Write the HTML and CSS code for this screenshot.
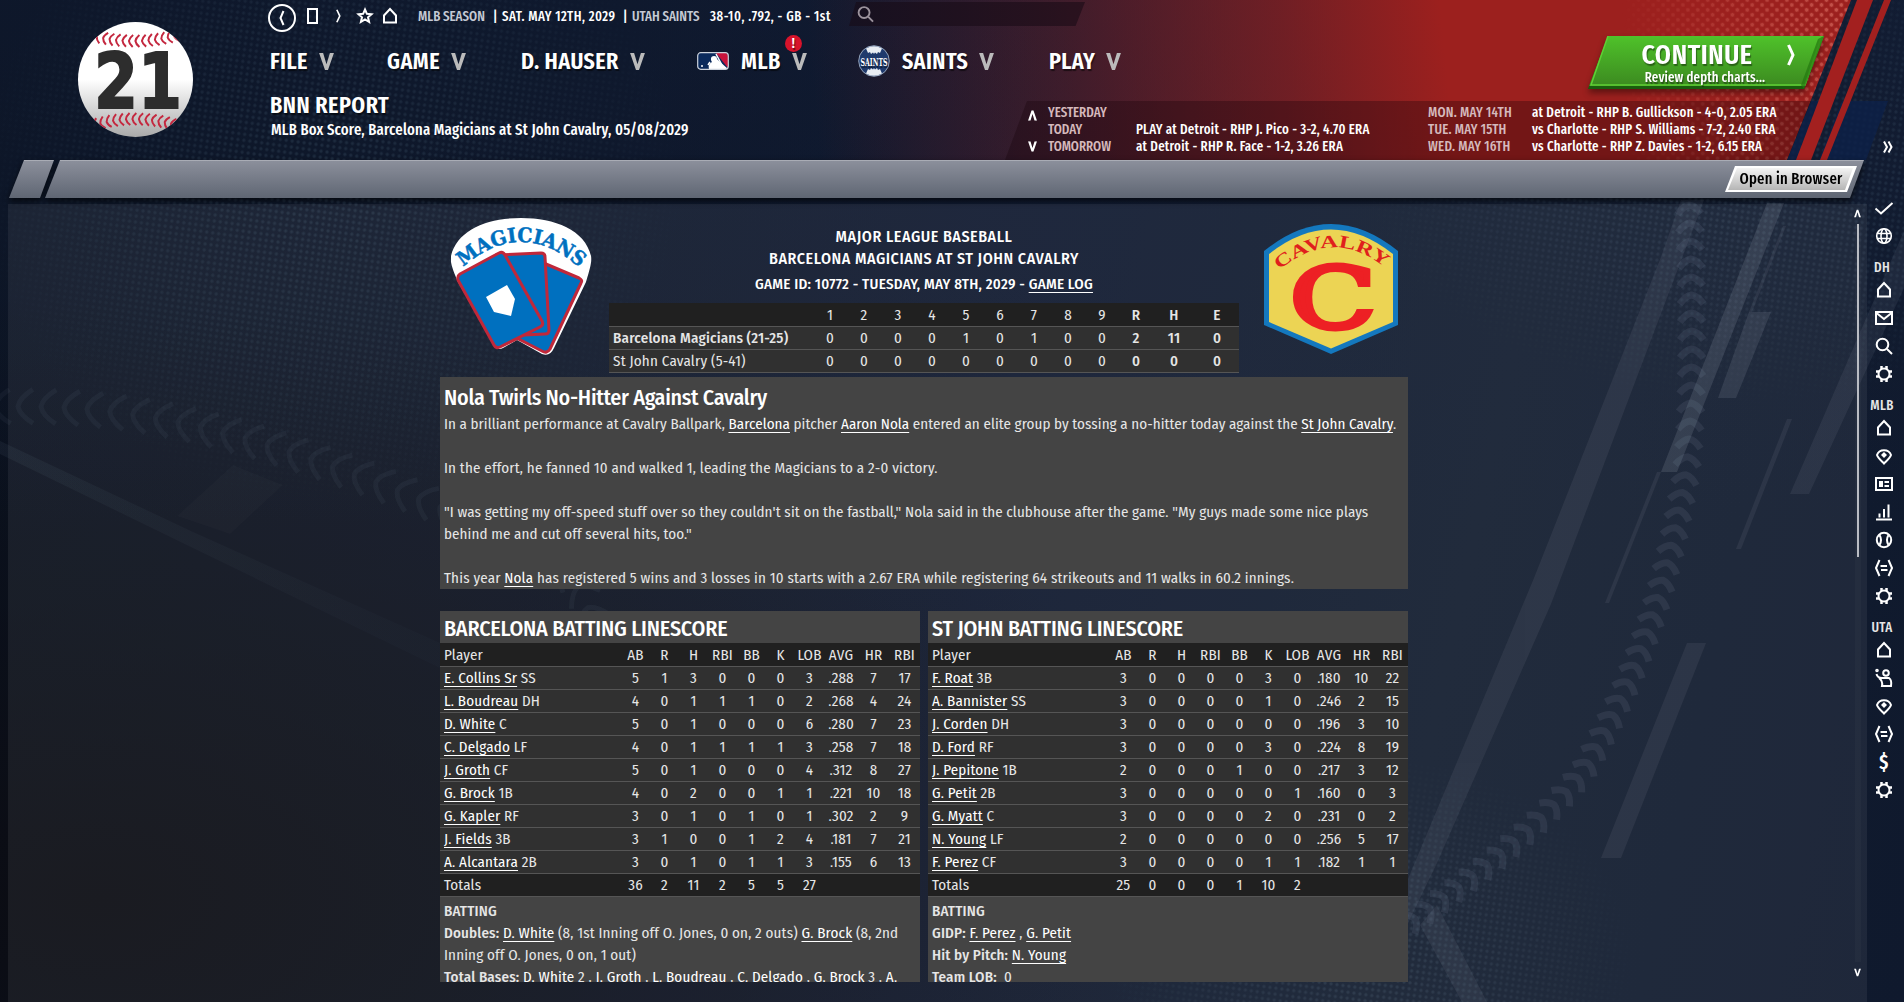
FILE: index.html
```
<!DOCTYPE html>
<html lang="en">
<head>
    <meta charset="UTF-8">
    <title>BNN Report - MLB Box Score</title>
    <link rel="stylesheet" href="styles.css">
</head>
<body>
    <svg class="backdrop" width="1904" height="1002" viewBox="0 0 1904 1002">
        <defs>
            <pattern id="dots" width="6" height="6" patternUnits="userSpaceOnUse" patternTransform="rotate(8)"><circle cx="3" cy="3" r="1.7" fill="#6f93a8"/></pattern>
            <pattern id="redDots" width="7" height="7" patternUnits="userSpaceOnUse" patternTransform="rotate(45)"><circle cx="3.5" cy="3.5" r="2" fill="#ff9d8c"/></pattern>
            <radialGradient id="fade"><stop offset="0" stop-color="#fff"/><stop offset=".55" stop-color="#fff" stop-opacity=".6"/><stop offset="1" stop-color="#fff" stop-opacity="0"/></radialGradient>
            <linearGradient id="fadeRight"><stop offset="0" stop-color="#fff" stop-opacity="0"/><stop offset="1" stop-color="#fff"/></linearGradient>
            <mask id="dotMask">
                <ellipse cx="330" cy="180" rx="360" ry="330" fill="url(#fade)"/>
                <ellipse cx="1750" cy="170" rx="400" ry="240" fill="url(#fade)"/>
                <ellipse cx="1370" cy="960" rx="270" ry="210" fill="url(#fade)"/>
            </mask>
            <mask id="redMask"><rect x="1620" y="0" width="230" height="160" fill="url(#fadeRight)"/></mask>
            <linearGradient id="red" gradientUnits="userSpaceOnUse" x1="810" x2="1440" y1="60" y2="0">
                <stop offset="0" stop-color="#9c201e" stop-opacity="0"/>
                <stop offset=".4" stop-color="#9c201e" stop-opacity=".33"/>
                <stop offset=".75" stop-color="#9c201e" stop-opacity=".68"/>
                <stop offset="1" stop-color="#9c201e"/>
            </linearGradient>
            <linearGradient id="streak" gradientUnits="userSpaceOnUse" x1="0" x2="440" y1="0" y2="0"><stop offset="0" stop-color="#8fa3bb" stop-opacity=".07"/><stop offset="1" stop-color="#3f7080" stop-opacity=".03"/></linearGradient>
        </defs>
        <rect width="1904" height="1002" fill="url(#dots)" mask="url(#dotMask)" opacity=".17"/>
        <polygon points="0,441 193,532 440,643 440,668 193,548 0,454" fill="url(#streak)"/>
        <polygon points="177,516 233,465 283,485 230,534" fill="#fff" opacity=".02"/>
        <g fill="#b8c0d0" opacity=".08">
            <polygon points="1681,200 1704,200 1551,604 1437,863 1395,950 1395,900 1408,879 1534,578 1661,257"/>
            <polygon points="1767,203 1784,203 1677,472 1661,472"/>
            <polygon points="1783,226 1786,226 1752,312 1749,312"/>
            <polygon points="1749,312 1771,312 1736,398 1718,398"/>
            <polygon points="1657,472 1661,472 1609,603 1605,603"/>
            <polygon points="1787,419 1792,419 1741,549 1736,549"/>
            <polygon points="1904,231 1904,288 1809,494 1790,494"/>
            <polygon points="1687,643 1706,643 1621,858 1601,858"/>
            <polygon points="1437,905 1487,1002 1462,1002 1420,925"/>
        </g>
        <polygon points="1767,203 1784,203 1677,472 1661,472" fill="#b8c0d0" opacity=".07"/>
        <polygon points="1749,312 1771,312 1736,398 1718,398" fill="#b8c0d0" opacity=".05"/>
        <g id="stitchesLeft" fill="none" stroke="#93a5bd" stroke-opacity=".06"></g>
        <g id="stitches" fill="none" stroke="#93a5bd" stroke-opacity=".11"></g>
        <polygon points="780,0 1851,0 1787,160 780,160" fill="url(#red)"/>
        <g mask="url(#redMask)"><polygon points="1500,0 1851,0 1787,160 1500,160" fill="url(#redDots)" opacity=".42"/></g>
        <polygon points="1842,101 1888,101 1866,160 1819,160" fill="#0d2048" opacity=".8"/>
        <polygon points="1811,101 1830,101 1806,160 1787,160" fill="#0d2048" opacity=".8"/>
        <polygon points="1857,0 1873,0 1811,160 1796,160" fill="#a3201f"/>
        <polygon points="1884,0 1891,0 1827,160 1820,160" fill="#a3201f"/>
        <polygon points="1027,101 1811,101 1787,160 1005,160" fill="#150008" opacity=".3"/>
    </svg>

    <svg class="symbols">
        <symbol id="home" viewBox="0 0 18 18"><path d="M3 15.5V8.5L9 2l6 6.500v7z"/></symbol>
        <symbol id="gear" viewBox="0 0 18 18"><circle cx="9" cy="9" r="5.500"/><path stroke-width="2.500" d="M6.500 1v3M11.500 1v3M6.500 14v3M11.500 14v3M1 6.500h3M1 11.500h3M14 6.500h3M14 11.500h3" /></symbol>
        <symbol id="pin" viewBox="0 0 18 18"><path d="M2 8C4 1.500 14 1.500 16 8c-1 3-4 5.500-7 8.500C6 13.500 3 11 2 8z"/><path stroke="none" fill="#fff" d="M9 5l3 3-3 3-3-3z"/></symbol>
        <symbol id="brackets" viewBox="0 0 18 18"><path d="M4.500 1L1 9l3.500 8M13.500 1L17 9l-3.500 8M5.500 7H12M6 11h6.500"/></symbol>
        <symbol id="search" viewBox="0 0 18 18"><circle cx="7.500" cy="7.500" r="5.800"/><path d="M12 12l5 5"/></symbol>
        <symbol id="vee" viewBox="0 0 14 16"><path stroke="none" d="M0 0h3.800L7 10.500 10.200 0H14L8.400 16H5.600z"/></symbol>
    </svg>

    <div class="app">
        <header>
            <div class="logo">
                <svg width="115" height="115" viewBox="0 0 115 115">
                    <defs>
                        <linearGradient id="ball" x2="0" y2="1"><stop offset=".5" stop-color="#fff"/><stop offset="1" stop-color="#aaa"/></linearGradient>
                        <clipPath id="ballClip"><circle cx="57.500" cy="57.500" r="57.500"/></clipPath>
                    </defs>
                    <circle cx="57.500" cy="57.500" r="57.500" fill="url(#ball)"/>
                    <g id="seams" fill="none" stroke="#c4283f" stroke-width="2" clip-path="url(#ballClip)"></g>
                    <text x="16" y="86" class="logo-num" textLength="88" lengthAdjust="spacingAndGlyphs">21</text>
                </svg>
            </div>
            <div class="head-main">
                <div class="topbar">
                    <svg class="ic back" viewBox="0 0 28 28"><circle cx="14" cy="14" r="13"/><path d="M15.500 7l-3 7 3 7"/></svg>
                    <svg class="ic stop" viewBox="0 0 11 16"><path d="M1 1h9v14H1z"/></svg>
                    <svg class="ic fwd" viewBox="0 0 6 16"><path d="M1 0.500l3.500 7.500L1 15.500"/></svg>
                    <svg class="ic star" viewBox="0 0 16 16"><path d="M8 1.500l1.900 4.300 4.600.4-3.500 3.100 1.100 4.700L8 11.500 3.900 14 5 9.300 1.500 6.200l4.600-.4z"/></svg>
                    <svg class="ic house"><use href="#home"/></svg>
                    <span class="t-season">MLB SEASON</span><span class="t-bar">|</span>
                    <span class="t-date">SAT. MAY 12TH, 2029</span><span class="t-bar">|</span>
                    <span class="t-team">UTAH SAINTS</span><span class="t-rec">38-10, .792, - GB - 1st</span>
                    <div class="search"><svg class="ic"><use href="#search"/></svg></div>
                </div>
                <div class="navrow">
                    <nav>
                        <a>FILE<svg class="vee"><use href="#vee"/></svg></a>
                        <a>GAME<svg class="vee"><use href="#vee"/></svg></a>
                        <a>D. HAUSER<svg class="vee"><use href="#vee"/></svg></a>
                        <a>
                            <svg class="mlb" width="32" height="18" viewBox="0 0 32 18">
                                <rect x=".7" y=".7" width="30.600" height="16.600" rx="3" fill="#0b2a5c"/>
                                <path d="M19 1h9q3 0 3 3v12z" fill="#c8143c"/>
                                <path d="M12 17c-1-4 1-6 3-7-2-3-1-6 2-6 2 0 3 1 3 3l2 2 9 8z" fill="#fff"/>
                                <path d="M19 2l7 13M13 10l-2 3" stroke="#fff" stroke-width="1.500"/>
                                <circle cx="5" cy="14" r="1" fill="#fff"/>
                                <rect x=".7" y=".7" width="30.600" height="16.600" rx="3" fill="none" stroke="#cdd3dc" stroke-width="1.200"/>
                            </svg>MLB<svg class="vee"><use href="#vee"/></svg><span class="alert">!</span>
                        </a>
                        <a>
                            <svg class="saints" width="32" height="32" viewBox="0 0 32 32">
                                <circle cx="16" cy="16" r="15.300" fill="#1f3a6d" stroke="#93a3ba"/>
                                <path d="M8 3.500Q16-1 24 3.500L22 8l-2-1-1 2-2-1.500L16 9l-1-1.500L13 9l-1-2-2 1zM8 28.500q8 4.500 16 0L22 24l-2 1-1-2-2 1.500-1-1.500-1 1.500-2-1.500-1 2-2-1z" fill="#e8edf3"/>
                                <text x="2.500" y="20.500" class="saints-txt" textLength="27" lengthAdjust="spacingAndGlyphs">SAINTS</text>
                            </svg>SAINTS<svg class="vee"><use href="#vee"/></svg>
                        </a>
                        <a>PLAY<svg class="vee"><use href="#vee"/></svg></a>
                    </nav>
                    <div class="continue">
                        <svg class="continue-bg" width="236" height="53" viewBox="0 0 236 53">
                            <defs><linearGradient id="green" x2="0" y2="1"><stop offset="0" stop-color="#4fc22a"/><stop offset="1" stop-color="#3c8a20"/></linearGradient></defs>
                            <path d="M20 0h216L216 53H0z" fill="#1a5c0d"/>
                            <path d="M20 0h216L217 50H1z" fill="url(#green)"/>
                            <path d="M20 0L3 49h214L233 2" fill="none" stroke="#5fcf35" stroke-width="1.500"/>
                            <path d="M236 0L216 53l-3-4L230 3z" fill="#24780f" opacity=".7"/>
                        </svg>
                        <div class="continue-txt"><b>CONTINUE</b><span>Review depth charts...</span></div>
                        <svg class="ic continue-arrow" viewBox="0 0 8 22"><path d="M1.500 1L6 11l-4.500 10"/></svg>
                    </div>
                </div>
                <div class="titlerow">
                    <div>
                        <h1>BNN REPORT</h1>
                        <p class="sub">MLB Box Score, Barcelona Magicians at St John Cavalry, 05/08/2029</p>
                    </div>
                    <div class="schedule">
                        <div class="arrows">
                            <svg class="up" viewBox="0 0 14 16"><use href="#vee"/></svg>
                            <svg viewBox="0 0 14 16"><use href="#vee"/></svg>
                        </div>
                        <div class="days d1">YESTERDAY<br>TODAY<br>TOMORROW</div>
                        <div class="d2"><br>PLAY at Detroit - RHP J. Pico - 3-2, 4.70 ERA<br>at Detroit - RHP R. Face - 1-2, 3.26 ERA</div>
                        <div class="days d3">MON. MAY 14TH<br>TUE. MAY 15TH<br>WED. MAY 16TH</div>
                        <div class="d4">at Detroit - RHP B. Gullickson - 4-0, 2.05 ERA<br>vs Charlotte - RHP S. Williams - 7-2, 2.40 ERA<br>vs Charlotte - RHP Z. Davies - 1-2, 6.15 ERA</div>
                    </div>
                </div>
            </div>
        </header>

        <div class="toolbar">
            <div class="tb-small"></div>
            <div class="tb-main"><div class="open-btn"><span>Open in Browser</span></div></div>
        </div>

        <main>
            <div class="content">
                <div class="matchup">
                    <svg class="mag-logo" width="142" height="140" viewBox="0 0 142 140">
                        <defs><path id="magArc" d="M9 52Q71-5 133 54"/></defs>
                        <path d="M7 64C1 50-1 44 0 38C6 12 36 0 70 0S134 12 140 38C141 44 139 50 135 64L103 130q-4 9-12 6L66 122l-14 8q-6 3-9-3z" fill="#fff"/>
                        <g fill="#0070bf" stroke="#c0283a" stroke-width="3" stroke-linejoin="round">
                            <path d="M76 38L128 60q4 2 2 5L99 131q-3 5-8 2L50 112z"/>
                            <path d="M45 37l45-2q4 0 4 4l4 73q0 4-4 4l-40 2z"/>
                            <path d="M9 56L48 35q4-2 6 2l37 66q2 4-2 6l-40 20q-4 2-6-2L7 62q-1-4 2-6z"/>
                        </g>
                        <path d="M35 79l21-12 8 14-4 17-17-4z" fill="#fff"/>
                        <text class="mag-txt"><textPath href="#magArc" startOffset="4" textLength="130" lengthAdjust="spacingAndGlyphs">MAGICIANS</textPath></text>
                    </svg>
                    <div class="center">
                        <div class="h-line">MAJOR LEAGUE BASEBALL</div>
                        <div class="h-line">BARCELONA MAGICIANS AT ST JOHN CAVALRY</div>
                        <div class="h-game">GAME ID: 10772 - TUESDAY, MAY 8TH, 2029 - <a>GAME LOG</a></div>
                        <table class="score">
                            <colgroup><col class="c-team"><col span="9"><col><col class="c-h"><col class="c-e"></colgroup>
                            <tr class="dark"><td></td><td>1</td><td>2</td><td>3</td><td>4</td><td>5</td><td>6</td><td>7</td><td>8</td><td>9</td><th>R</th><th>H</th><th>E</th></tr>
                            <tr><th>Barcelona Magicians (21-25)</th><td>0</td><td>0</td><td>0</td><td>0</td><td>1</td><td>0</td><td>1</td><td>0</td><td>0</td><th>2</th><th>11</th><th>0</th></tr>
                            <tr><td>St John Cavalry (5-41)</td><td>0</td><td>0</td><td>0</td><td>0</td><td>0</td><td>0</td><td>0</td><td>0</td><td>0</td><th>0</th><th>0</th><th>0</th></tr>
                        </table>
                    </div>
                    <svg class="cav-logo" width="134" height="130" viewBox="0 0 134 130">
                        <defs><path id="cavArc" d="M15 46Q68 3 119 42"/></defs>
                        <path d="M0 27Q67-27 134 27V101L67 130 0 101z" fill="#1478be"/>
                        <path d="M5 30Q67-19 129 30V98L67 124.500 5 98z" fill="#ecd454"/>
                        <text class="cav-txt"><textPath href="#cavArc" textLength="116" lengthAdjust="spacingAndGlyphs">CAVALRY</textPath></text>
                        <text x="26" y="104" class="cav-c" textLength="86" lengthAdjust="spacingAndGlyphs">C</text>
                    </svg>
                </div>

                <div class="article">
                    <h2>Nola Twirls No-Hitter Against Cavalry</h2>
                    <p class="lead">In a brilliant performance at Cavalry Ballpark, <a>Barcelona</a> pitcher <a>Aaron Nola</a> entered an elite group by tossing a no-hitter today against the <a>St John Cavalry</a>.</p>
                    <p>In the effort, he fanned 10 and walked 1, leading the Magicians to a 2-0 victory.</p>
                    <p class="quote">"I was getting my off-speed stuff over so they couldn't sit on the fastball," Nola said in the clubhouse after the game. "My guys made some nice plays<br>behind me and cut off several hits, too."</p>
                    <p>This year <a>Nola</a> has registered 5 wins and 3 losses in 10 starts with a 2.67 ERA while registering 64 strikeouts and 11 walks in 60.2 innings.</p>
                </div>

                <div class="boxes">
                    <section class="box">
                        <h2>BARCELONA BATTING LINESCORE</h2>
                        <table class="batting" id="barcelona"></table>
                        <div class="notes">
                            <b>BATTING</b><br>
                            <b>Doubles:</b> <a>D. White</a> (8, 1st Inning off O. Jones, 0 on, 2 outs) <a>G. Brock</a> (8, 2nd<br>Inning off O. Jones, 0 on, 1 out)<br>
                            <b>Total Bases:</b> <a>D. White</a> 2 , <a>J. Groth</a> , <a>L. Boudreau</a> , <a>C. Delgado</a> , <a>G. Brock</a> 3 , <a>A.</a>
                        </div>
                    </section>
                    <section class="box">
                        <h2>ST JOHN BATTING LINESCORE</h2>
                        <table class="batting" id="stjohn"></table>
                        <div class="notes">
                            <b>BATTING</b><br>
                            <b>GIDP:</b> <a>F. Perez</a> , <a>G. Petit</a><br>
                            <b>Hit by Pitch:</b> <a>N. Young</a><br>
                            <b>Team LOB:</b>&nbsp; 0
                        </div>
                    </section>
                </div>
            </div>
            <div class="scrollbar">
                <svg class="up" viewBox="0 0 14 16"><use href="#vee"/></svg>
                <div class="track"><div class="thumb"></div></div>
                <svg viewBox="0 0 14 16"><use href="#vee"/></svg>
            </div>
        </main>

        <aside>
            <svg class="ic more" viewBox="0 0 10 12"><path d="M1 0.500l3 5.500-3 5.500M5.500 0.500l3 5.500-3 5.500"/></svg>
            <svg class="ic" viewBox="0 0 18 18"><path d="M.5 9.500L6 14.500 17.500 4"/></svg>
            <svg class="ic thin" viewBox="0 0 18 18"><circle cx="9" cy="9" r="7.300"/><ellipse cx="9" cy="9" rx="3" ry="7.300"/><path d="M2 6.500h14M2 11.500h14"/></svg>
            <span>DH</span>
            <svg class="ic"><use href="#home"/></svg>
            <svg class="ic" viewBox="0 0 18 18"><path d="M1 3h16v12H1zM1.500 4L9 10l7.500-6"/></svg>
            <svg class="ic"><use href="#search"/></svg>
            <svg class="ic"><use href="#gear"/></svg>
            <span>MLB</span>
            <svg class="ic"><use href="#home"/></svg>
            <svg class="ic"><use href="#pin"/></svg>
            <svg class="ic" viewBox="0 0 18 18"><path d="M1 3h16v12H1z"/><path stroke="none" fill="#fff" d="M4 6h4v6H4zM9.500 6H14v2H9.500zM9.500 10H14v2H9.500z"/></svg>
            <svg class="ic" viewBox="0 0 18 18"><path d="M1 16.500h16M4.500 14.500v-4M9 14.500V6M13.500 14.500V1.500"/></svg>
            <svg class="ic" viewBox="0 0 18 18"><circle cx="9" cy="9" r="7.200"/><path d="M4.500 4q3 5 0 10M13.500 4q-3 5 0 10"/></svg>
            <svg class="ic"><use href="#brackets"/></svg>
            <svg class="ic"><use href="#gear"/></svg>
            <span>UTA</span>
            <svg class="ic"><use href="#home"/></svg>
            <svg class="ic" viewBox="0 0 18 18"><circle cx="11" cy="4" r="2.800"/><circle cx="2" cy="1.500" r=".8"/><path d="M1.500 5q1 4 5.500 4h7q3 2 2 8H7q1-5-3-8"/></svg>
            <svg class="ic"><use href="#pin"/></svg>
            <svg class="ic"><use href="#brackets"/></svg>
            <span class="dollar">$</span>
            <svg class="ic"><use href="#gear"/></svg>
        </aside>
    </div>

    <script>
        const heads = ['AB', 'R', 'H', 'RBI', 'BB', 'K', 'LOB', 'AVG', 'HR', 'RBI'];

        const barcelona = [
            ['E. Collins Sr', 'SS', 5, 1, 3, 0, 0, 0, 3, '.288', 7, 17],
            ['L. Boudreau', 'DH', 4, 0, 1, 1, 1, 0, 2, '.268', 4, 24],
            ['D. White', 'C', 5, 0, 1, 0, 0, 0, 6, '.280', 7, 23],
            ['C. Delgado', 'LF', 4, 0, 1, 1, 1, 1, 3, '.258', 7, 18],
            ['J. Groth', 'CF', 5, 0, 1, 0, 0, 0, 4, '.312', 8, 27],
            ['G. Brock', '1B', 4, 0, 2, 0, 0, 1, 1, '.221', 10, 18],
            ['G. Kapler', 'RF', 3, 0, 1, 0, 1, 0, 1, '.302', 2, 9],
            ['J. Fields', '3B', 3, 1, 0, 0, 1, 2, 4, '.181', 7, 21],
            ['A. Alcantara', '2B', 3, 0, 1, 0, 1, 1, 3, '.155', 6, 13]
        ];

        const stjohn = [
            ['F. Roat', '3B', 3, 0, 0, 0, 0, 3, 0, '.180', 10, 22],
            ['A. Bannister', 'SS', 3, 0, 0, 0, 0, 1, 0, '.246', 2, 15],
            ['J. Corden', 'DH', 3, 0, 0, 0, 0, 0, 0, '.196', 3, 10],
            ['D. Ford', 'RF', 3, 0, 0, 0, 0, 3, 0, '.224', 8, 19],
            ['J. Pepitone', '1B', 2, 0, 0, 0, 1, 0, 0, '.217', 3, 12],
            ['G. Petit', '2B', 3, 0, 0, 0, 0, 0, 1, '.160', 0, 3],
            ['G. Myatt', 'C', 3, 0, 0, 0, 0, 2, 0, '.231', 0, 2],
            ['N. Young', 'LF', 2, 0, 0, 0, 0, 0, 0, '.256', 5, 17],
            ['F. Perez', 'CF', 3, 0, 0, 0, 0, 1, 1, '.182', 1, 1]
        ];

        function cells(list) {
            return list.map(v => '<td>' + v + '</td>').join('');
        }

        function fillTable(id, players, totals) {
            let html = '<colgroup><col class="c-name"><col span="7"><col class="c-avg"><col class="c-last" span="2"></colgroup>';
            html += '<tr class="dark"><td>Player</td>' + cells(heads) + '</tr>';
            players.forEach(p => {
                html += '<tr><td><a>' + p[0] + '</a> ' + p[1] + '</td>' + cells(p.slice(2)) + '</tr>';
            });
            html += '<tr class="dark"><td>Totals</td>' + cells(totals.concat(['', '', ''])) + '</tr>';
            document.getElementById(id).innerHTML = html;
        }

        fillTable('barcelona', barcelona, [36, 2, 11, 2, 5, 5, 27]);
        fillTable('stjohn', stjohn, [25, 0, 0, 0, 1, 10, 2]);

        // stitches follow a curve, each one turned along it
        function stitch(group, curve, step, half, depth, width) {
            const ns = 'http://www.w3.org/2000/svg';
            const path = document.createElementNS(ns, 'path');
            path.setAttribute('d', curve);
            const len = path.getTotalLength();
            for (let d = 0; d < len; d += step) {
                const a = path.getPointAtLength(d);
                const b = path.getPointAtLength(Math.min(d + 1, len));
                const angle = Math.atan2(b.y - a.y, b.x - a.x) * 180 / Math.PI;
                const mark = document.createElementNS(ns, 'path');
                mark.setAttribute('d', `M${depth} ${-half}Q${depth * 0.1} ${-half * 0.5} 0 0Q${depth * 0.1} ${half * 0.5} ${depth} ${half}`);
                mark.setAttribute('transform', `translate(${a.x} ${a.y}) rotate(${angle})`);
                mark.setAttribute('stroke-width', width);
                document.getElementById(group).appendChild(mark);
            }
        }

        stitch('stitchesLeft', 'M-5 407C130 402 250 430 437 506S560 590 610 640', 23, 17, 15, 5);
        stitch('stitches', 'M1689 205C1694 330 1692 450 1684 485C1665 590 1640 670 1584 770C1547 820 1487 868 1400 930', 18, 12, 9, 7);
        stitch('seams', 'M96 14Q57 24 16 14', 6.5, 6, -4, 2);
        stitch('seams', 'M16 103Q57 91 98 103', 6.5, 6, 4, 2);
    </script>
</body>
</html>
```
FILE: styles.css
```
* {
    box-sizing: border-box;
}
body {
    margin: 0;
    width: 1904px;
    height: 1002px;
    overflow: hidden;
    position: relative;
    font-family: "Fira Sans Condensed", "Open Sans", sans-serif;
    font-size: 15px;
    color: #e6e6e6;
    background: linear-gradient(102deg, #0a1220 0%, #0c1526 30%, #0e182e 52%, #131d2f 75%, #0f192d 100%);
}
body::before {
    content: "";
    position: absolute;
    inset: 0;
    background: linear-gradient(to bottom, #131e3870 0, #131d3350 300px, transparent 520px), radial-gradient(1100px 600px at 100px 900px, #0b0c13, #0b0c1300);
}
.backdrop {
    position: absolute;
    left: 0;
    top: 0;
}
.symbols {
    display: none;
}
h1, h2, p {
    margin: 0;
    font-weight: 500;
}
b, th {
    font-weight: 500;
}
.ic {
    width: 18px;
    height: 18px;
    flex: none;
    fill: none;
    stroke: #fff;
    stroke-width: 2;
    overflow: visible;
}
.thin {
    stroke-width: 1.6;
}
.app {
    position: relative;
    display: grid;
    grid-template-columns: 1867px 37px;
    grid-template-rows: 160px 44px 798px;
}

/* header */
header {
    display: flex;
    font-family: "Fira Sans Extra Condensed", "Fira Sans Condensed", "Open Sans", sans-serif;
    font-weight: 500;
    font-size: 14px;
    color: #fff;
}
.logo {
    width: 271px;
    flex: none;
    padding: 22px 0 0 78px;
}
.logo-num {
    font: bold 77px "DejaVu Sans", sans-serif;
    fill: #2d2d2d;
    stroke: #2d2d2d;
    stroke-width: 2;
}
.head-main {
    flex: 1;
}
.topbar {
    display: flex;
    align-items: center;
    height: 34px;
    padding-bottom: 2px;
    white-space: nowrap;
}
.back {
    width: 28px;
    height: 28px;
    margin: 4px 11px 0 -3px;
}
.stop {
    width: 11px;
    height: 16px;
    margin-right: 18px;
}
.fwd {
    width: 5px;
    height: 16px;
    margin-right: 16px;
}
.star {
    width: 16px;
    height: 16px;
    margin-right: 8px;
}
.house {
    margin-right: 19px;
}
.t-season, .t-team {
    color: #c5cad4;
}
.t-season {
    width: 75px;
}
.t-bar {
    width: 9px;
}
.t-date {
    width: 121px;
    letter-spacing: 0.5px;
}
.t-team {
    width: 78px;
}
.t-rec {
    width: 139px;
    letter-spacing: 0.55px;
}
.search {
    width: 236px;
    height: 24px;
    padding: 3px 8px;
    margin-top: -4px;
    background: #1509148c;
    clip-path: polygon(3% 0, 100% 0, 96% 100%, 0 100%);
}
.search .ic {
    stroke: #9c939d;
    width: 17px;
}
.navrow {
    display: flex;
    justify-content: space-between;
    height: 56px;
    padding-top: 2px;
    padding-right: 43px;
}
nav {
    display: grid;
    grid-template-columns: 117px 134px 176px 161px 191px 100px;
    height: 50px;
    font-size: 24px;
    font-weight: 600;
    letter-spacing: 0.4px;
}
nav a {
    position: relative;
    left: -1px;
    display: flex;
    align-items: center;
    text-shadow: 1px 2px 1px #0008;
}
.vee {
    width: 15px;
    height: 17px;
    margin-left: 11px;
    fill: #bbb;
}
.mlb, .saints {
    margin-right: 12px;
}
.saints-txt {
    font: bold 11px "DejaVu Serif", serif;
    letter-spacing: 0;
    fill: #fff;
}
.alert {
    position: absolute;
    left: 88px;
    top: -1px;
    width: 17px;
    height: 17px;
    border-radius: 50%;
    background: #d8132b;
    font-size: 14px;
    line-height: 17px;
    text-align: center;
}
.continue {
    position: relative;
    width: 236px;
    height: 53px;
    filter: drop-shadow(0 4px 3px #0006);
}
.continue-bg {
    position: absolute;
    left: 0;
    top: 0;
}
.continue-txt {
    position: relative;
    width: 218px;
    text-align: center;
    text-shadow: 1px 2px 1px #0006;
}
.continue-txt b {
    display: block;
    font-size: 28px;
    line-height: 37px;
    font-weight: 600;
    letter-spacing: 0.6px;
}
.continue-txt span {
    display: block;
    line-height: 9px;
    padding-left: 16px;
    letter-spacing: 0.15px;
}
.continue-arrow {
    position: absolute;
    right: 29px;
    top: 8px;
    width: 8px;
    height: 22px;
    stroke-width: 3;
}
.titlerow {
    display: flex;
    justify-content: space-between;
    height: 70px;
}
.titlerow h1 {
    font-size: 24px;
    font-weight: 600;
    line-height: 31px;
    letter-spacing: 0.5px;
    margin-left: -1px;
    text-shadow: 1px 2px 1px #0008;
}
.sub {
    font-size: 16px;
    line-height: 17px;
    letter-spacing: 0.2px;
}
.schedule {
    display: flex;
    width: 839px;
    padding-top: 14px;
    line-height: 17px;
    letter-spacing: 0.25px;
    white-space: nowrap;
}
.schedule > div {
    flex: none;
}
.arrows {
    width: 20px;
    display: flex;
    flex-direction: column;
    justify-content: space-between;
    height: 48px;
    padding-top: 6px;
}
.arrows svg, .scrollbar svg {
    width: 9px;
    height: 11px;
    fill: #fff;
}
.up {
    transform: scaleY(-1);
}
.days {
    color: #d5b9bc;
}
.d1 {
    width: 88px;
    letter-spacing: 0;
}
.d2 {
    width: 292px;
}
.d3 {
    width: 104px;
}

/* grey bar */
.toolbar {
    display: flex;
    padding: 0 3px 6px 9px;
    filter: drop-shadow(0 3px 3px #000a);
}
.tb-small, .tb-main {
    height: 38px;
    background: linear-gradient(#8b8f9b, #5f6673);
    border-top: 1px solid #a9acb5;
}
.tb-small {
    width: 45px;
    margin-right: -9px;
    clip-path: polygon(15px 0, 100% 0, 31px 100%, 0 100%);
}
.tb-main {
    flex: 1;
    display: flex;
    justify-content: flex-end;
    padding: 5px 7px;
    clip-path: polygon(15px 0, 100% 0, calc(100% - 14px) 100%, 0 100%);
}
.open-btn {
    width: 132px;
    height: 26px;
    padding: 2px;
    background: #fff;
    clip-path: polygon(10px 0, 100% 0, 122px 100%, 0 100%);
}
.open-btn span {
    display: block;
    height: 22px;
    background: linear-gradient(#f4f4f4, #b5b5b5);
    clip-path: polygon(10px 0, 126px 0, 118px 100%, 1px 100%);
    color: #000;
    font: 500 16px/22px "Fira Sans Extra Condensed", "Fira Sans Condensed", sans-serif;
    letter-spacing: 0.2px;
    text-align: center;
}

/* report */
main {
    grid-row: 3;
    margin-left: 8px;
    padding-left: 432px;
    background: #ffffff10;
    display: flex;
    justify-content: space-between;
}
.content {
    width: 968px;
    height: 778px;
    overflow: hidden;
}
a {
    color: #fff;
}
.content a {
    text-decoration: underline;
    text-decoration-thickness: 1px;
    text-underline-offset: 3px;
    text-decoration-skip-ink: none;
}
.matchup {
    display: flex;
    height: 173px;
}
.mag-logo {
    margin: 14px 16px 0 11px;
    flex: none;
}
.mag-txt {
    font: bold 20px "DejaVu Serif", serif;
    fill: #0070bf;
    stroke: #0070bf;
    stroke-width: 0.5;
}
.cav-logo {
    margin: 20px 0 0 25px;
    flex: none;
}
.cav-txt {
    font: bold 18px "Liberation Serif", serif;
    fill: #e01f1c;
}
.cav-c {
    font: 84px "DejaVu Serif", serif;
    fill: #ed2024;
    stroke: #ed2024;
    stroke-width: 5;
}
.center {
    width: 630px;
    padding-top: 22px;
    text-align: center;
    font-weight: 500;
    color: #fff;
}
.h-line {
    font-size: 16px;
    line-height: 22px;
    letter-spacing: 0.55px;
}
.h-game {
    line-height: 22px;
    margin: 3px 0 8px;
    letter-spacing: 0.25px;
}
table {
    border-collapse: collapse;
    table-layout: fixed;
    font-weight: 400;
    color: #e6e6e6;
}
tr {
    height: 23px;
    background: #303030;
    border-bottom: 1px solid #555;
}
.dark {
    background: #202020;
}
td, th {
    padding: 0;
    height: 23px;
    line-height: 20px;
    text-align: center;
    white-space: nowrap;
}
td:first-child, th:first-child {
    text-align: left;
    padding-left: 4px;
}
tr:first-child td, tr:first-child th {
    padding-top: 2px;
}
.score {
    width: 630px;
    letter-spacing: 0.2px;
}
.score col {
    width: 34px;
}
.score .c-team {
    width: 204px;
}
.score .c-h {
    width: 42px;
}
.score .c-e {
    width: 44px;
}
.article {
    height: 212px;
    padding: 0 4px;
    background: #444;
    line-height: 22px;
    letter-spacing: 0.17px;
}
.article h2 {
    height: 36px;
    font-size: 22px;
    line-height: 41px;
    letter-spacing: -0.3px;
    color: #fff;
}
.article p {
    margin-bottom: 22px;
    font-weight: 400;
    white-space: nowrap;
}
.article .lead {
    letter-spacing: 0.06px;
}
.article .quote {
    letter-spacing: 0.1px;
}
.boxes {
    display: flex;
    gap: 8px;
    margin-top: 22px;
}
.box {
    width: 480px;
    background: #444;
}
.box h2 {
    height: 32px;
    padding-left: 4px;
    font-size: 22px;
    line-height: 35px;
    letter-spacing: -0.22px;
    color: #fff;
}
.batting {
    width: 480px;
    letter-spacing: 0.15px;
}
.batting col {
    width: 29px;
}
.batting .c-name {
    width: 181px;
}
.batting .c-avg {
    width: 34px;
}
.batting .c-last {
    width: 31px;
}
.notes {
    padding: 3px 4px 0;
    line-height: 22px;
    letter-spacing: 0.15px;
    white-space: nowrap;
}

.scrollbar {
    width: 9px;
    margin: 5px 5px 25px 0;
    display: flex;
    flex-direction: column;
    align-items: center;
}
.scrollbar svg {
    height: 9px;
    width: 7px;
}
.track {
    flex: 1;
    width: 6px;
    margin: 6px 0;
    background: #ffffff06;
}
.thumb {
    width: 2px;
    height: 333px;
    margin: 0 auto;
    background: #b9bcc3;
}

/* right icon strip */
aside {
    grid-column: 2;
    grid-row: 1 / 4;
    display: flex;
    flex-direction: column;
    align-items: center;
    gap: 10px;
    padding-top: 141px;
    padding-right: 3px;
    font: 500 14px/18px "Fira Sans Extra Condensed", "Fira Sans Condensed", sans-serif;
}
aside .more {
    width: 10px;
    height: 12px;
    margin: 0 -8px 36px 0;
}
aside span {
    height: 18px;
    margin: 4px 4px -6px 0;
    letter-spacing: 0.4px;
}
aside .dollar {
    margin: 0;
    font-size: 20px;
    font-weight: 600;
    color: #fff;
}
```
